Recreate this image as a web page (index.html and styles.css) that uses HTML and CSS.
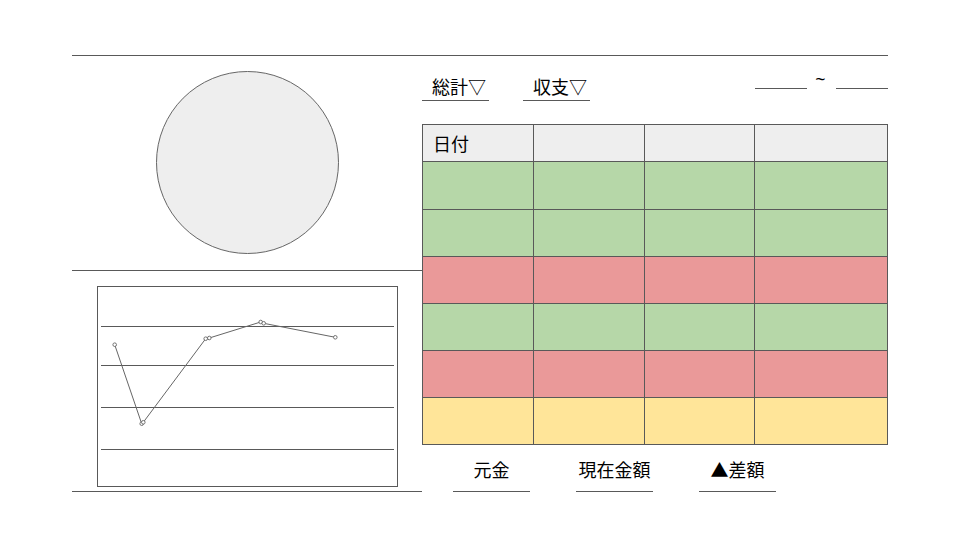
FILE: index.html
```html
<!DOCTYPE html>
<html lang="ja">
<head>
<meta charset="utf-8">
<link rel="stylesheet" href="styles.css">
</head>
<body>
<div class="page">
  <div class="rule-top"></div>
  <div class="main">
    <div class="left">
      <div class="pie-area">
        <div class="pie"></div>
      </div>
      <div class="chart-area">
        <svg class="chart" width="301" height="201" viewBox="0 0 301 201">
          <rect x="0.5" y="0.5" width="300" height="200" fill="#fff" stroke="#595959" stroke-width="1"/>
          <g stroke="#595959" stroke-width="1">
            <line x1="4" y1="40.5" x2="297" y2="40.5"/>
            <line x1="4" y1="79.5" x2="297" y2="79.5"/>
            <line x1="4" y1="121.5" x2="297" y2="121.5"/>
            <line x1="4" y1="163.5" x2="297" y2="163.5"/>
          </g>
          <polyline fill="none" stroke="#666" stroke-width="1" points="17.7,58.7 44.7,137.7 46.3,136.3 108.7,52.7 112.3,52 163.7,36 166.7,37.3 238.3,51.3"/>
          <g fill="#fff" stroke="#666" stroke-width="0.9">
            <circle cx="17.7" cy="58.7" r="1.8"/>
            <circle cx="44.7" cy="137.7" r="1.8"/>
            <circle cx="46.3" cy="136.3" r="1.8"/>
            <circle cx="108.7" cy="52.7" r="1.8"/>
            <circle cx="112.3" cy="52" r="1.8"/>
            <circle cx="163.7" cy="36" r="1.8"/>
            <circle cx="166.7" cy="37.3" r="1.8"/>
            <circle cx="238.3" cy="51.3" r="1.8"/>
          </g>
        </svg>
      </div>
    </div>
    <div class="right">
      <div class="controls">
        <div class="dropdown">総計▽</div>
        <div class="dropdown">収支▽</div>
        <div class="range">
          <span class="date-field"></span>
          <span class="tilde">~</span>
          <span class="date-field"></span>
        </div>
      </div>
      <div class="table">
        <div class="cell head first">日付</div>
        <div class="cell head"></div>
        <div class="cell head"></div>
        <div class="cell head"></div>
        <div class="cell green"></div><div class="cell green"></div><div class="cell green"></div><div class="cell green"></div>
        <div class="cell green"></div><div class="cell green"></div><div class="cell green"></div><div class="cell green"></div>
        <div class="cell red"></div><div class="cell red"></div><div class="cell red"></div><div class="cell red"></div>
        <div class="cell green"></div><div class="cell green"></div><div class="cell green"></div><div class="cell green"></div>
        <div class="cell red"></div><div class="cell red"></div><div class="cell red"></div><div class="cell red"></div>
        <div class="cell yellow"></div><div class="cell yellow"></div><div class="cell yellow"></div><div class="cell yellow"></div>
      </div>
      <div class="labels">
        <div class="label">元金</div>
        <div class="label">現在金額</div>
        <div class="label">▲差額</div>
      </div>
    </div>
  </div>
</div>
</body>
</html>
```

FILE: styles.css
```css
* { box-sizing: border-box; }
html, body {
  margin: 0;
  padding: 0;
  background: #fff;
}
body {
  font-family: "Noto Sans CJK JP", "Noto Sans", sans-serif;
  font-weight: 400;
  color: #000;
  width: 960px;
  height: 540px;
  overflow: hidden;
}
.page {
  padding-top: 55px;
  padding-left: 72px;
}
.rule-top {
  width: 816px;
  border-top: 1px solid #595959;
}
.main {
  display: flex;
}
.left {
  width: 350px;
  display: flex;
  flex-direction: column;
}
.pie-area {
  height: 215px;
  border-bottom: 1px solid #595959;
  padding-top: 15px;
  padding-left: 84px;
}
.pie {
  width: 183px;
  height: 183px;
  border-radius: 50%;
  background: #eeeeee;
  border: 1px solid #666;
}
.chart-area {
  height: 221px;
  border-bottom: 1px solid #595959;
  padding-top: 15px;
  padding-left: 25px;
}
.chart { display: block; }
.right {
  width: 466px;
  display: flex;
  flex-direction: column;
}
.controls {
  display: flex;
  align-items: flex-start;
  height: 68px;
  padding-top: 18px;
}
.dropdown {
  width: 67px;
  font-size: 18px;
  line-height: 24px;
  padding-left: 10px;
  padding-bottom: 2px;
  border-bottom: 1px solid #595959;
  margin-right: 34px;
  white-space: nowrap;
}
.range {
  margin-left: auto;
  display: flex;
  align-items: flex-start;
  padding-top: 2px;
}
.date-field {
  display: block;
  width: 52px;
  height: 13px;
  border-bottom: 1px solid #595959;
}
.tilde {
  display: block;
  width: 29px;
  padding-right: 2px;
  text-align: center;
  font-family: "Noto Sans", sans-serif;
  font-size: 18px;
  line-height: 14px;
  margin-top: -4px;
}
.table {
  display: grid;
  grid-template-columns: 110px 110px 109px 132px;
  grid-template-rows: 36px 47px 46px 46px 46px 46px 46px;
  gap: 1px;
  padding: 1px;
  background: #595959;
  width: 466px;
}
.cell { background: #fff; }
.head { background: #eeeeee; }
.first {
  font-size: 18px;
  line-height: 36px;
  padding-left: 10px;
  padding-bottom: 2px;
}
.green { background: #b6d7a8; }
.red { background: #ea9999; }
.yellow { background: #ffe599; }
.labels {
  display: flex;
  padding-left: 31px;
  padding-top: 12px;
  gap: 46px;
}
.label {
  width: 77px;
  text-align: center;
  font-size: 18px;
  line-height: 24px;
  padding-bottom: 10px;
  border-bottom: 1px solid #595959;
  white-space: nowrap;
}
```
